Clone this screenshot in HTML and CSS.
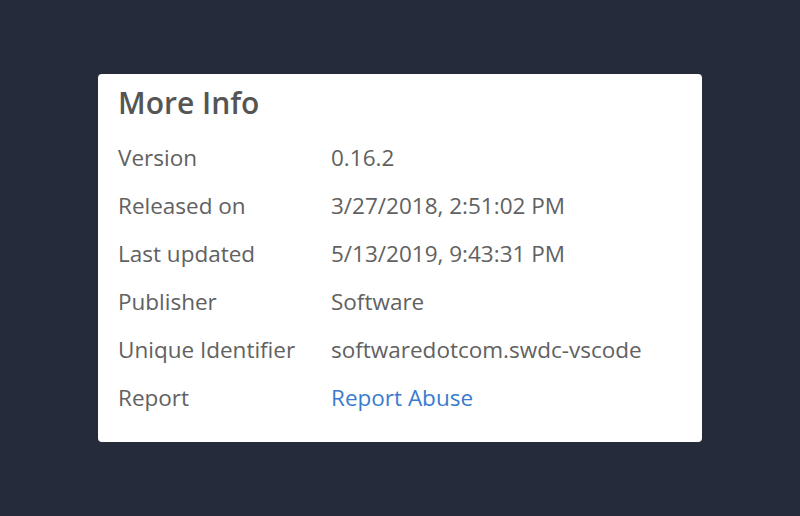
FILE: index.html
```html
<!DOCTYPE html>
<html>
<head>
<meta charset="utf-8">
<link rel="stylesheet" href="styles.css">
</head>
<body>
<div class="page">
  <div class="card">
    <h2 class="title">More Info</h2>
    <div class="rows">
      <div class="row"><div class="label">Version</div><div class="value">0.16.2</div></div>
      <div class="row"><div class="label">Released on</div><div class="value">3/27/2018, 2:51:02 PM</div></div>
      <div class="row"><div class="label">Last updated</div><div class="value">5/13/2019, 9:43:31 PM</div></div>
      <div class="row"><div class="label">Publisher</div><div class="value">Software</div></div>
      <div class="row"><div class="label">Unique Identifier</div><div class="value">softwaredotcom.swdc-vscode</div></div>
      <div class="row"><div class="label">Report</div><div class="value"><a class="link" href="#">Report Abuse</a></div></div>
    </div>
  </div>
</div>
</body>
</html>
```
FILE: styles.css
```css
html, body {
  margin: 0;
  padding: 0;
  background: #252b3a;
}
.page {
  width: 800px;
  height: 516px;
  display: flex;
  align-items: center;
  justify-content: center;
  font-family: "Open Sans", "Noto Sans", sans-serif;
}
.card {
  width: 604px;
  height: 368px;
  box-sizing: border-box;
  background: #ffffff;
  border-radius: 4px;
  padding: 9px 20px 0 20px;
}
.title {
  margin: 0;
  font-size: 30px;
  font-weight: 600;
  color: #555555;
  line-height: 40px;
}
.rows {
  display: flex;
  flex-direction: column;
  margin-top: 10px;
}
.row {
  display: flex;
  height: 48px;
  align-items: center;
  font-size: 22.5px;
  color: #616161;
}
.label {
  width: 213px;
  flex-shrink: 0;
}
.value {
  flex: 1;
}
.link {
  color: #3a7bd0;
  text-decoration: none;
}
```
